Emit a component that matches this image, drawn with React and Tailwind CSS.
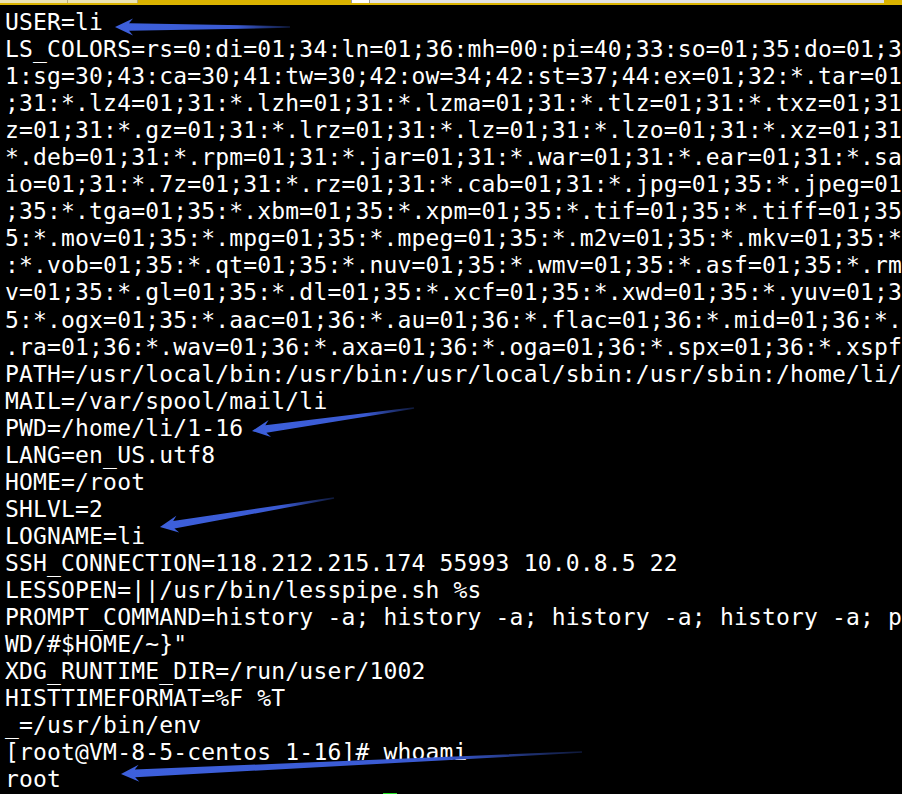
const lines = [
  'USER=li',
  'LS_COLORS=rs=0:di=01;34:ln=01;36:mh=00:pi=40;33:so=01;35:do=01;35:bd=40;33;01:cd=40;33;01',
  '1:sg=30;43:ca=30;41:tw=30;42:ow=34;42:st=37;44:ex=01;32:*.tar=01;31:*.tgz=01;31',
  ';31:*.lz4=01;31:*.lzh=01;31:*.lzma=01;31:*.tlz=01;31:*.txz=01;31:*.tzo=01;31',
  'z=01;31:*.gz=01;31:*.lrz=01;31:*.lz=01;31:*.lzo=01;31:*.xz=01;31:*.bz2=01;31',
  '*.deb=01;31:*.rpm=01;31:*.jar=01;31:*.war=01;31:*.ear=01;31:*.sar=01;31',
  'io=01;31:*.7z=01;31:*.rz=01;31:*.cab=01;31:*.jpg=01;35:*.jpeg=01;35:*.gif',
  ';35:*.tga=01;35:*.xbm=01;35:*.xpm=01;35:*.tif=01;35:*.tiff=01;35:*.png=01',
  '5:*.mov=01;35:*.mpg=01;35:*.mpeg=01;35:*.m2v=01;35:*.mkv=01;35:*.webm=01',
  ':*.vob=01;35:*.qt=01;35:*.nuv=01;35:*.wmv=01;35:*.asf=01;35:*.rm=01;35',
  'v=01;35:*.gl=01;35:*.dl=01;35:*.xcf=01;35:*.xwd=01;35:*.yuv=01;35:*.cgm=01',
  '5:*.ogx=01;35:*.aac=01;36:*.au=01;36:*.flac=01;36:*.mid=01;36:*.midi=01',
  '.ra=01;36:*.wav=01;36:*.axa=01;36:*.oga=01;36:*.spx=01;36:*.xspf=01;36:',
  'PATH=/usr/local/bin:/usr/bin:/usr/local/sbin:/usr/sbin:/home/li/.local/bin',
  'MAIL=/var/spool/mail/li',
  'PWD=/home/li/1-16',
  'LANG=en_US.utf8',
  'HOME=/root',
  'SHLVL=2',
  'LOGNAME=li',
  'SSH_CONNECTION=118.212.215.174 55993 10.0.8.5 22',
  'LESSOPEN=||/usr/bin/lesspipe.sh %s',
  'PROMPT_COMMAND=history -a; history -a; history -a; history -a; printf "\\033]0;%s',
  'WD/#$HOME/~}"',
  'XDG_RUNTIME_DIR=/run/user/1002',
  'HISTTIMEFORMAT=%F %T',
  '_=/usr/bin/env',
  '[root@VM-8-5-centos 1-16]# whoami',
  'root',
];

// annotation arrows: tip -> tail
const arrows = [
  { id: 'a1', tip: [115, 27], tail: [290, 27] },
  { id: 'a2', tip: [252, 431], tail: [414, 408] },
  { id: 'a3', tip: [160, 527], tail: [334, 498] },
  { id: 'a4', tip: [121, 774], tail: [582, 752] },
];

const Arrow = ({ id, tip, tail }) => {
  const [x1, y1] = tip;
  const [x2, y2] = tail;
  const len = Math.hypot(x2 - x1, y2 - y1);
  const ux = (x2 - x1) / len;
  const uy = (y2 - y1) / len;
  const nx = -uy;
  const ny = ux;
  const p = (d, w) => `${x1 + ux * d + nx * w},${y1 + uy * d + ny * w}`;
  const pts = [
    p(0, 0),
    p(18, 8.5),
    p(14, 3.8),
    p(len, 0.8),
    p(len, -0.8),
    p(14, -3.8),
    p(18, -8.5),
  ].join(' ');
  return (
    <g>
      <defs>
        <linearGradient id={id} gradientUnits="userSpaceOnUse" x1={x1} y1={y1} x2={x2} y2={y2}>
          <stop offset="0" stopColor="#3d60dc" />
          <stop offset="0.7" stopColor="#3a5ad2" />
          <stop offset="1" stopColor="#0e1838" />
        </linearGradient>
      </defs>
      <polygon points={pts} fill={`url(#${id})`} />
    </g>
  );
};

const App = () => {
  return (
    <div className="relative w-[902px] h-[794px] bg-black overflow-hidden">
      {/* window title strip */}
      <div className="flex h-[3px] bg-[#dab300]">
        <div className="w-[68px] bg-[#ece4b4] border-r border-[#b8ad80]" />
        <div className="w-[70px] bg-[#ece4b4] border-r border-[#b8ad80]" />
        <div className="w-[213px]" />
        <div className="w-[19px] bg-white border-x border-[#9a9a9a]" />
        <div className="w-[514px] bg-[#e2e2e2]" />
      </div>
      <div className="h-[2px] bg-[#dab300]" />

      <div className="pt-[4px] pl-[5px] text-white text-[23px] leading-[27.05px] tracking-[0.17px] whitespace-pre font-['DejaVu_Sans_Mono',monospace]">
        {lines.map((l, i) => (
          <div key={i}>{l}</div>
        ))}
        <div className="flex">
          <span>[root@VM-8-5-centos 1-16]# </span>
          <span className="w-[14px] h-[27px] bg-[#22e022]" />
        </div>
      </div>

      <svg className="absolute inset-0 pointer-events-none" width="902" height="794">
        {arrows.map((a) => (
          <Arrow key={a.id} {...a} />
        ))}
      </svg>
    </div>
  );
};

export default App;
